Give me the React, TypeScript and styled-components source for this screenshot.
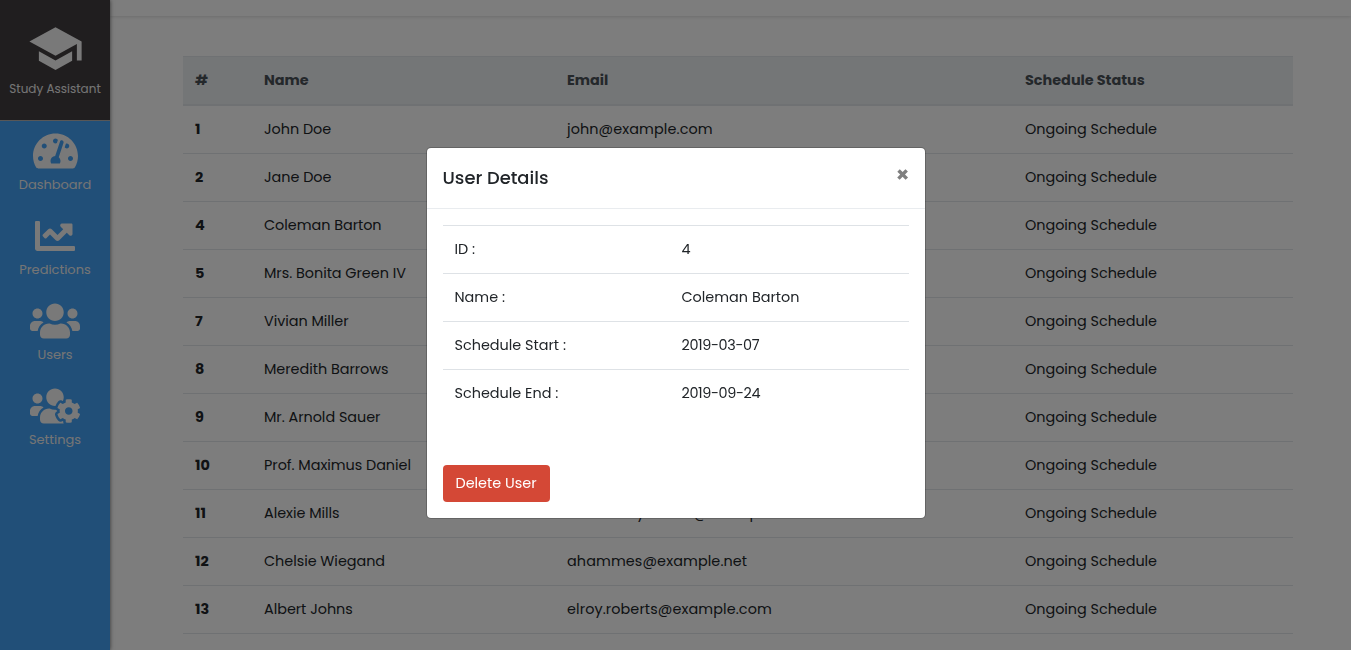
import React from 'react';
import styled, { createGlobalStyle } from 'styled-components';
import { FaTachometerAlt, FaChartLine, FaUsers, FaUsersCog } from 'react-icons/fa';
import { MdSchool } from 'react-icons/md';

const GlobalStyle = createGlobalStyle`
  *, *::before, *::after { box-sizing: border-box; }
  body {
    margin: 0;
    overflow: hidden;
    background: #fafafa;
    color: #212529;
    font-family: Poppins, Inter, sans-serif;
    font-size: 14.4px;
    line-height: 23px;
  }
`;

const Layout = styled.div`
  display: flex;
  height: 100vh;
  overflow: hidden;
`;

const Sidebar = styled.aside`
  flex: none;
  width: 110px;
  background: #429ef0;
  box-shadow: 0 0 4px rgba(0, 0, 0, 0.6);
  color: #f2f2f2;
  z-index: 1;
`;

const Brand = styled.div`
  display: flex;
  flex-direction: column;
  align-items: center;
  height: 121px;
  padding-top: 20px;
  background: #403c3e;
  border-bottom: 1px solid #b0aeae;
`;

const Caption = styled.span<{ $small?: boolean }>`
  font-size: ${(p) => (p.$small ? 12 : 12.96)}px;
  line-height: 20px;
  color: #ebebeb;
  white-space: nowrap;
`;

const BrandIcon = styled(MdSchool)`
  width: 57px;
  height: 57px;
  margin-bottom: 2px;
`;

const NavItem = styled.a<{ $iconWidth: number }>`
  display: flex;
  flex-direction: column;
  align-items: center;
  height: 85px;
  padding-top: 10px;
  gap: 4px;

  svg {
    width: ${(p) => p.$iconWidth}px;
    height: 40px;
  }
`;

const Main = styled.main`
  flex: 1;
  min-width: 0;
`;

const TopBar = styled.header`
  height: 16px;
  box-shadow: 0 1px 3px rgba(0, 0, 0, 0.12);
`;

const Content = styled.section`
  padding: 40px 58px 0 73px;
`;

const UserRow = styled.div<{ $head?: boolean }>`
  display: grid;
  grid-template-columns: 69px 303px 458px 1fr;
  align-items: center;
  height: ${(p) => (p.$head ? 50 : 48)}px;
  border-bottom: ${(p) => (p.$head ? 2 : 1)}px solid #dee2e6;
  ${(p) =>
    p.$head &&
    `
    border-top: 1px solid #dee2e6;
    background: #e9ecef;
    color: #495057;
    font-weight: 700;
  `}
`;

const Cell = styled.div<{ $bold?: boolean; $track?: number }>`
  padding: 0 12px;
  white-space: nowrap;
  font-weight: ${(p) => (p.$bold ? 700 : 'inherit')};
  letter-spacing: ${(p) => p.$track ?? 0}px;
`;

const Backdrop = styled.div`
  position: fixed;
  inset: 0;
  z-index: 10;
  padding-top: 147px;
  background: rgba(0, 0, 0, 0.5);
`;

const Dialog = styled.div`
  width: 500px;
  margin: 0 auto;
  background: #fff;
  background-clip: padding-box;
  border: 1px solid rgba(0, 0, 0, 0.2);
  border-radius: 5px;
`;

const DialogHeader = styled.div`
  display: flex;
  justify-content: space-between;
  align-items: flex-start;
  height: 61px;
  padding: 16px 15px 16px 16px;
  border-bottom: 1px solid #e9ecef;
`;

const DialogTitle = styled.h5`
  margin: 0;
  font-size: 17.9px;
  font-weight: 500;
  line-height: 27px;
`;

const CloseButton = styled.button`
  padding: 0;
  border: 0;
  background: none;
  color: #7f7f7f;
  font: 700 21.6px/1 Poppins, Inter, sans-serif;
`;

const DialogBody = styled.div`
  padding: 16px 16px 32px;
`;

const DetailRow = styled.div`
  display: grid;
  grid-template-columns: 227px 1fr;
  align-items: center;
  height: 48px;
  border-top: 1px solid #dee2e6;
`;

const DialogFooter = styled.div`
  padding: 16px;
`;

const DeleteButton = styled.button`
  display: block;
  width: 107px;
  height: 37px;
  padding: 0;
  border: 0;
  border-radius: 4px;
  background: #d44836;
  color: #fff;
  font: inherit;
`;

const users = [
  { id: 1, name: 'John Doe', email: 'john@example.com' },
  { id: 2, name: 'Jane Doe', email: 'jane@example.com' },
  { id: 4, name: 'Coleman Barton', email: 'barton@example.com' },
  { id: 5, name: 'Mrs. Bonita Green IV', email: 'bonita@example.com' },
  { id: 7, name: 'Vivian Miller', email: 'vivian@example.com' },
  { id: 8, name: 'Meredith Barrows', email: 'barrows@example.com' },
  { id: 9, name: 'Mr. Arnold Sauer', email: 'sauer@example.com' },
  { id: 10, name: 'Prof. Maximus Daniel', email: 'daniel@example.com' },
  { id: 11, name: 'Alexie Mills', email: 'shannomy.turnes@example.net' },
  { id: 12, name: 'Chelsie Wiegand', email: 'ahammes@example.net' },
  { id: 13, name: 'Albert Johns', email: 'elroy.roberts@example.com' },
];

const details: { term: string; value: string; track?: number }[] = [
  { term: 'ID :', value: '4' },
  { term: 'Name :', value: 'Coleman Barton' },
  { term: 'Schedule Start :', value: '2019-03-07', track: -0.36 },
  { term: 'Schedule End :', value: '2019-09-24', track: -0.36 },
];

const navItems = [
  { label: 'Dashboard', width: 45, Icon: FaTachometerAlt },
  { label: 'Predictions', width: 40, Icon: FaChartLine },
  { label: 'Users', width: 50, Icon: FaUsers },
  { label: 'Settings', width: 50, Icon: FaUsersCog },
];

export default function App() {
  return (
    <>
      <GlobalStyle />
      <Layout>
        <Sidebar>
          <Brand>
            <BrandIcon />
            <Caption $small>Study Assistant</Caption>
          </Brand>
          {navItems.map(({ label, width, Icon }) => (
            <NavItem key={label} $iconWidth={width}>
              <Icon />
              <Caption>{label}</Caption>
            </NavItem>
          ))}
        </Sidebar>
        <Main>
          <TopBar />
          <Content>
            <UserRow $head>
              <Cell>#</Cell>
              <Cell>Name</Cell>
              <Cell>Email</Cell>
              <Cell>Schedule Status</Cell>
            </UserRow>
            {users.map(({ id, name, email }) => (
              <UserRow key={id}>
                <Cell $bold>{id}</Cell>
                <Cell $track={-0.03}>{name}</Cell>
                <Cell $track={0.1}>{email}</Cell>
                <Cell $track={-0.03}>Ongoing Schedule</Cell>
              </UserRow>
            ))}
          </Content>
        </Main>
      </Layout>
      <Backdrop>
        <Dialog role="dialog">
          <DialogHeader>
            <DialogTitle>User Details</DialogTitle>
            <CloseButton aria-label="Close">×</CloseButton>
          </DialogHeader>
          <DialogBody>
            {details.map(({ term, value, track }) => (
              <DetailRow key={term}>
                <Cell>{term}</Cell>
                <Cell $track={track}>{value}</Cell>
              </DetailRow>
            ))}
          </DialogBody>
          <DialogFooter>
            <DeleteButton>Delete User</DeleteButton>
          </DialogFooter>
        </Dialog>
      </Backdrop>
    </>
  );
}
